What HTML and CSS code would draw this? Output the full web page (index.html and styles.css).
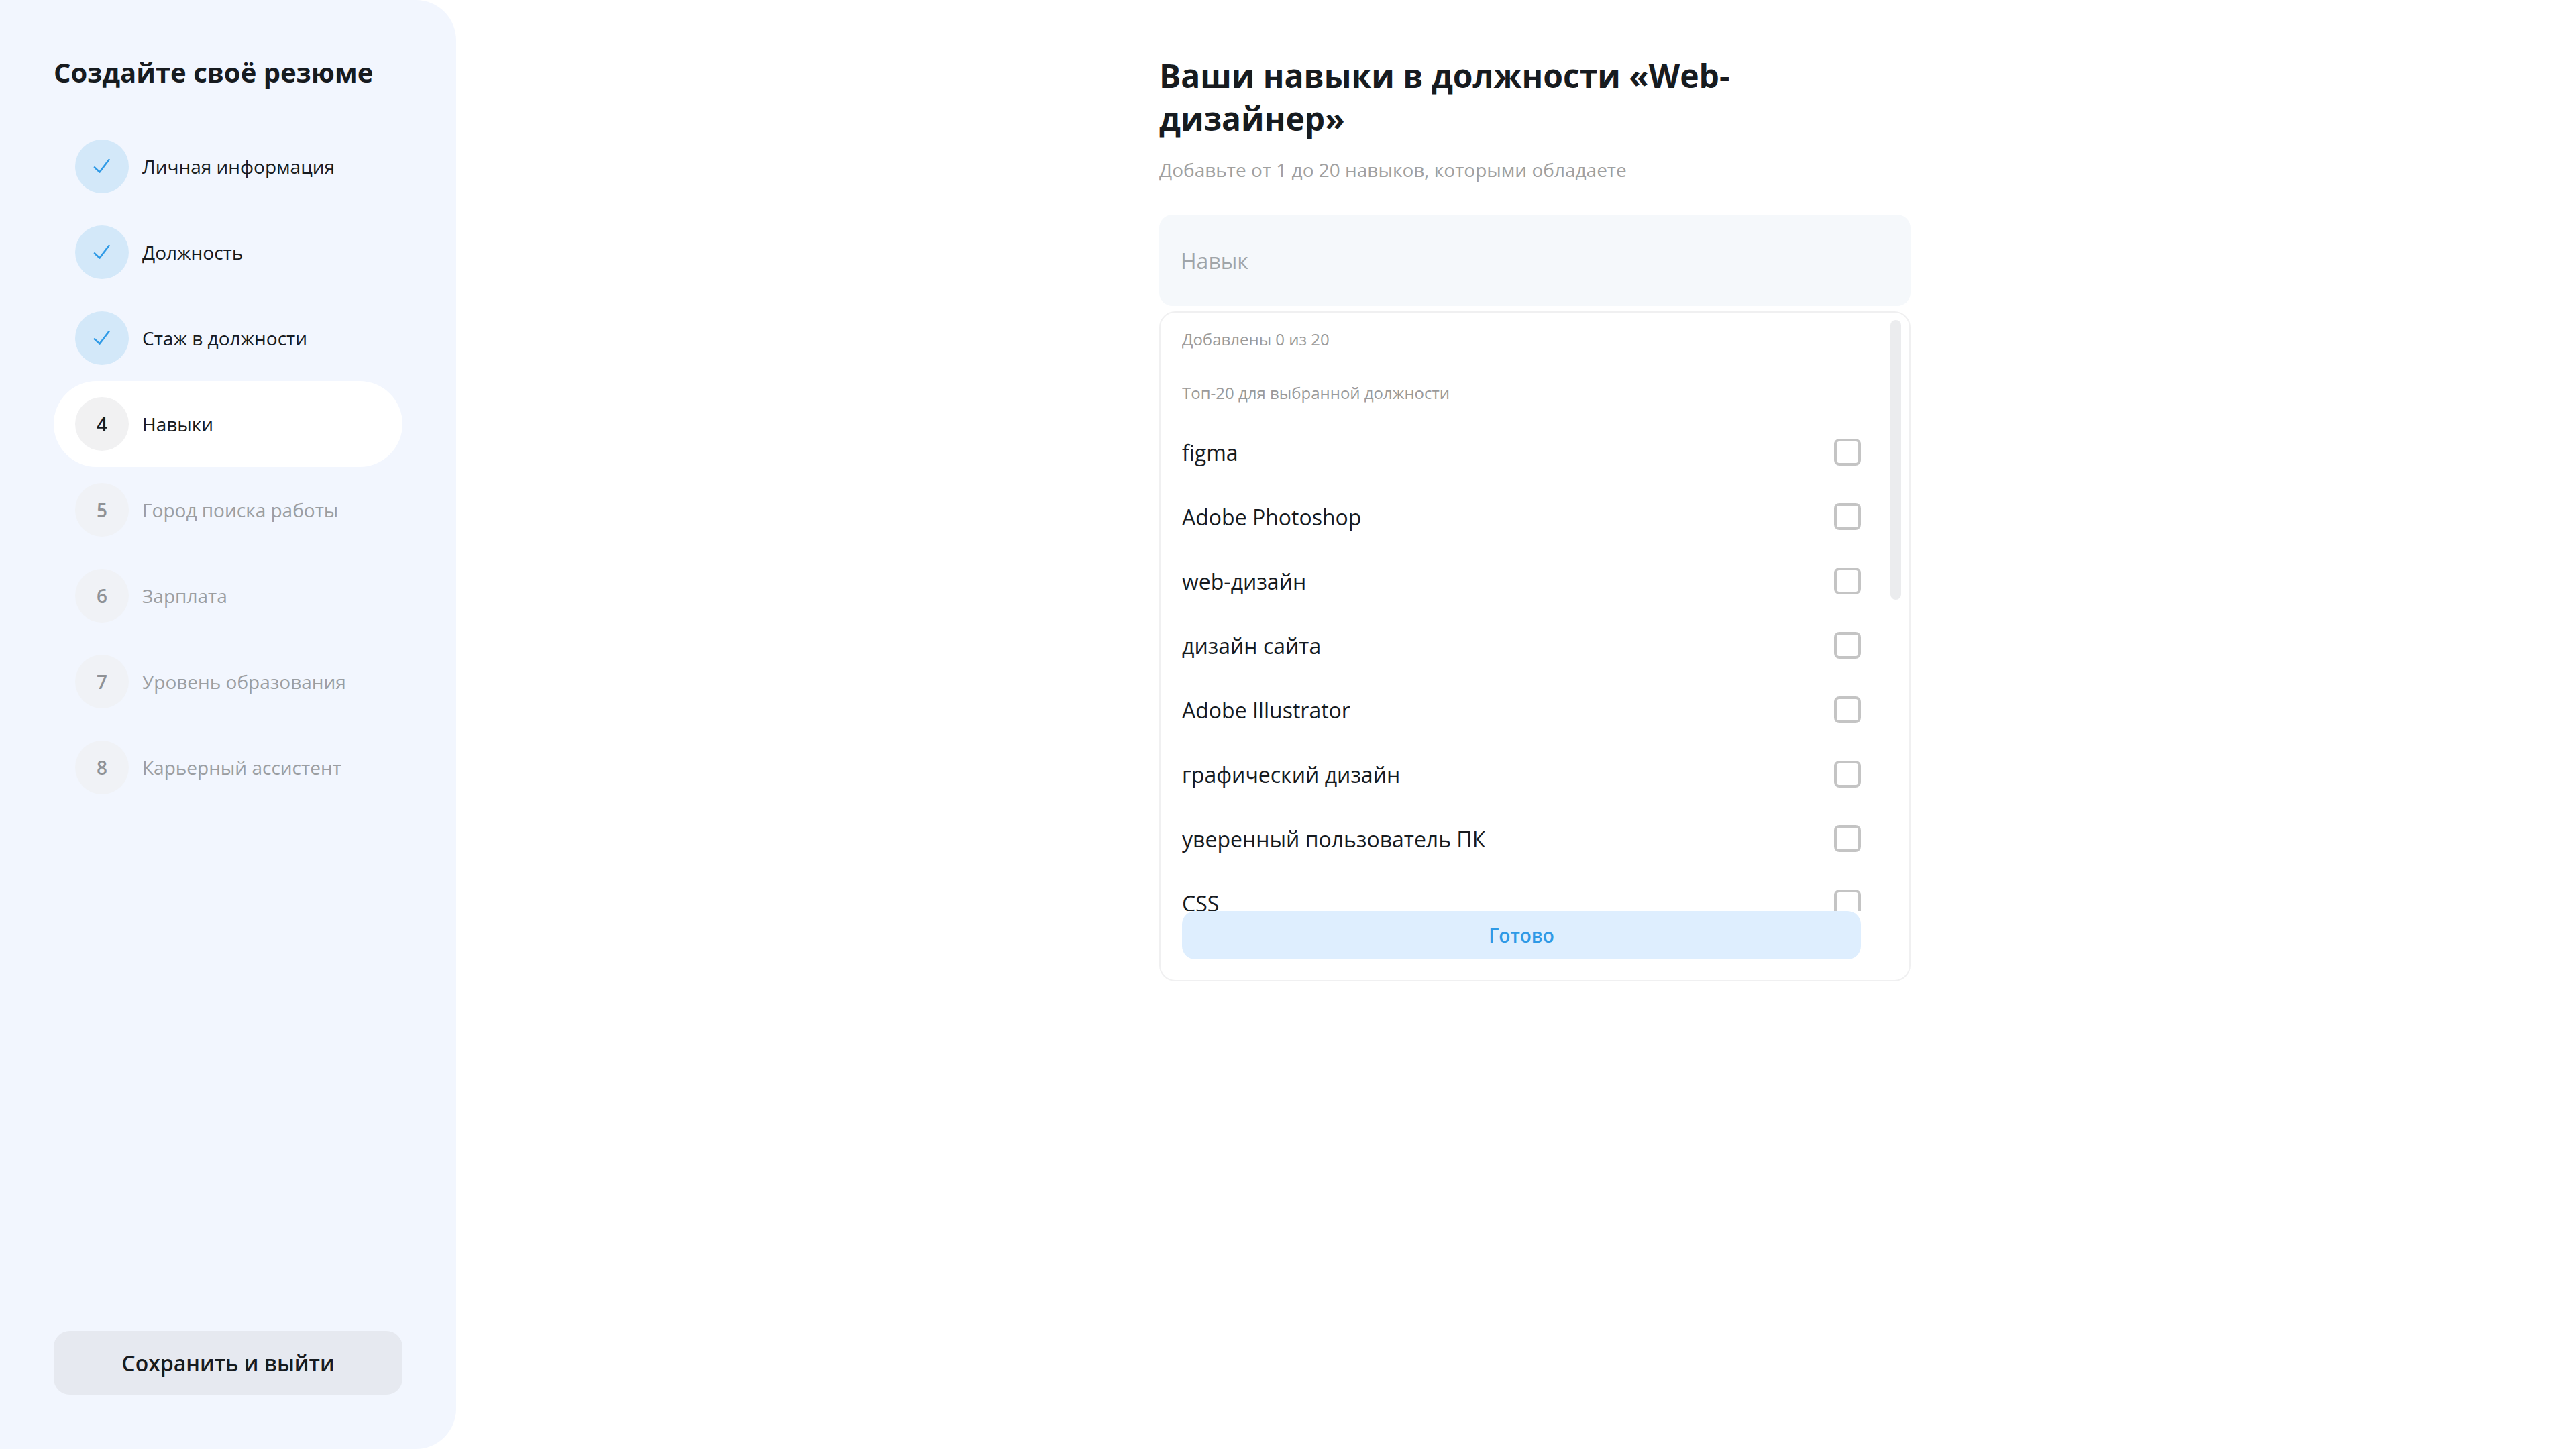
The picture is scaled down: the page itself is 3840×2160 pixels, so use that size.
FILE: index.html
```html
<!DOCTYPE html>
<html lang="ru">
<head>
  <meta charset="UTF-8">
  <title>Навыки</title>
  <link rel="stylesheet" href="styles.css">
</head>
<body>
  <div class="page">

    <!-- Sidebar -->
    <aside class="sidebar">
      <h2 class="sidebar-title">Создайте своё резюме</h2>
      <div class="steps">
        <div class="step done">
          <span class="step-num"><svg width="32" height="32" viewBox="0 0 32 32"><path d="M5 17.5l7.5 7L26.5 6" fill="none" stroke="#2f9ae6" stroke-width="2.6" stroke-linecap="round" stroke-linejoin="round"/></svg></span>
          <span>Личная информация</span>
        </div>
        <div class="step done">
          <span class="step-num"><svg width="32" height="32" viewBox="0 0 32 32"><path d="M5 17.5l7.5 7L26.5 6" fill="none" stroke="#2f9ae6" stroke-width="2.6" stroke-linecap="round" stroke-linejoin="round"/></svg></span>
          <span>Должность</span>
        </div>
        <div class="step done">
          <span class="step-num"><svg width="32" height="32" viewBox="0 0 32 32"><path d="M5 17.5l7.5 7L26.5 6" fill="none" stroke="#2f9ae6" stroke-width="2.6" stroke-linecap="round" stroke-linejoin="round"/></svg></span>
          <span>Стаж в должности</span>
        </div>
        <div class="step active">
          <span class="step-num">4</span>
          <span>Навыки</span>
        </div>
        <div class="step todo">
          <span class="step-num">5</span>
          <span>Город поиска работы</span>
        </div>
        <div class="step todo">
          <span class="step-num">6</span>
          <span>Зарплата</span>
        </div>
        <div class="step todo">
          <span class="step-num">7</span>
          <span>Уровень образования</span>
        </div>
        <div class="step todo">
          <span class="step-num">8</span>
          <span>Карьерный ассистент</span>
        </div>
      </div>
      <button class="save-btn">Сохранить и выйти</button>
    </aside>

    <!-- Main -->
    <main class="main">
      <div class="content">
        <h1 class="title">Ваши навыки в должности «Web-дизайнер»</h1>
        <p class="subtitle">Добавьте от 1 до 20 навыков, которыми обладаете</p>
        <div class="skill-input">Навык</div>
        <div class="panel">
          <div class="scrollbar"></div>
          <div class="list">
            <div class="counter">Добавлены 0 из 20</div>
            <div class="list-head">Топ-20 для выбранной должности</div>
            <div class="row"><span>figma</span><span class="checkbox"></span></div>
            <div class="row"><span>Adobe Photoshop</span><span class="checkbox"></span></div>
            <div class="row"><span>web-дизайн</span><span class="checkbox"></span></div>
            <div class="row"><span>дизайн сайта</span><span class="checkbox"></span></div>
            <div class="row"><span>Adobe Illustrator</span><span class="checkbox"></span></div>
            <div class="row"><span>графический дизайн</span><span class="checkbox"></span></div>
            <div class="row"><span>уверенный пользователь ПК</span><span class="checkbox"></span></div>
            <div class="row"><span>CSS</span><span class="checkbox"></span></div>
          </div>
          <button class="done-btn">Готово</button>
        </div>
      </div>
    </main>

  </div>
</body>
</html>
```

FILE: styles.css
```css
* {
  box-sizing: border-box;
}
body {
  margin: 0;
  background: #fff;
  color: #171b1f;
  font-family: "Open Sans", "Noto Sans", sans-serif;
}
.page {
  display: flex;
  height: 100vh;
}

/* sidebar */
.sidebar {
  width: 680px;
  flex-shrink: 0;
  display: flex;
  flex-direction: column;
  padding: 81px 80px 81px;
  background: #f2f6fe;
  border-radius: 0 60px 60px 0;
}
.sidebar-title {
  margin: 0 0 49px;
  font-size: 40px;
  line-height: 54px;
  font-weight: 700;
}
.steps {
  display: flex;
  flex-direction: column;
  flex: 1;
}
.step {
  display: flex;
  align-items: center;
  gap: 20px;
  height: 128px;
  flex-shrink: 0;
  padding-left: 32px;
  border-radius: 64px;
  font-size: 28px;
}
.step-num {
  width: 80px;
  height: 80px;
  flex-shrink: 0;
  display: flex;
  align-items: center;
  justify-content: center;
  border-radius: 50%;
  font-weight: 600;
  font-size: 28px;
}
.step.done .step-num {
  background: #d3e8f9;
}
.step.active {
  background: #fff;
}
.step.active .step-num {
  background: #f1f1f2;
}
.step.todo {
  color: #9b9ea2;
}
.step.todo .step-num {
  background: #f0f2f6;
  color: #8f9296;
}
.save-btn {
  height: 95px;
  border: none;
  border-radius: 24px;
  background: #e6e9f0;
  color: #171b1f;
  font-family: inherit;
  font-size: 32px;
  font-weight: 600;
}

/* main */
.main {
  flex: 1;
  padding: 81px 0 0 1048px;
}
.content {
  width: 1120px;
}
.title {
  width: 900px;
  margin: 0;
  font-size: 48px;
  line-height: 64px;
  font-weight: 700;
}
.subtitle {
  margin: 24px 0 47px;
  font-size: 28px;
  line-height: 40px;
  color: #a0a0a0;
}
.skill-input {
  height: 136px;
  display: flex;
  align-items: center;
  padding: 0 32px;
  margin-bottom: 8px;
  border-radius: 20px;
  background: #f5f8fb;
  font-size: 32px;
  color: #a0a5a9;
}
.panel {
  position: relative;
  height: 999px;
  padding: 0 72px 0 32px;
  border: 2px solid #f0f0f1;
  border-radius: 24px;
  background: #fff;
}
.scrollbar {
  position: absolute;
  top: 11px;
  right: 12px;
  width: 16px;
  height: 417px;
  border-radius: 8px;
  background: #ebecee;
}
.list {
  height: 892px;
  overflow: hidden;
}
.counter {
  margin-top: 23px;
  font-size: 24px;
  line-height: 34px;
  color: #9a9a9a;
}
.list-head {
  margin-top: 46px;
  margin-bottom: 23px;
  font-size: 24px;
  line-height: 34px;
  color: #9a9a9a;
}
.row {
  display: flex;
  align-items: center;
  justify-content: space-between;
  height: 96px;
  font-size: 32px;
}
.checkbox {
  width: 40px;
  height: 40px;
  border: 4px solid #c4c4c4;
  border-radius: 8px;
}
.done-btn {
  display: block;
  width: 100%;
  height: 72px;
  border: none;
  border-radius: 20px;
  background: #deeefe;
  color: #2f9ae6;
  font-family: inherit;
  font-size: 28px;
  font-weight: 600;
}
```
